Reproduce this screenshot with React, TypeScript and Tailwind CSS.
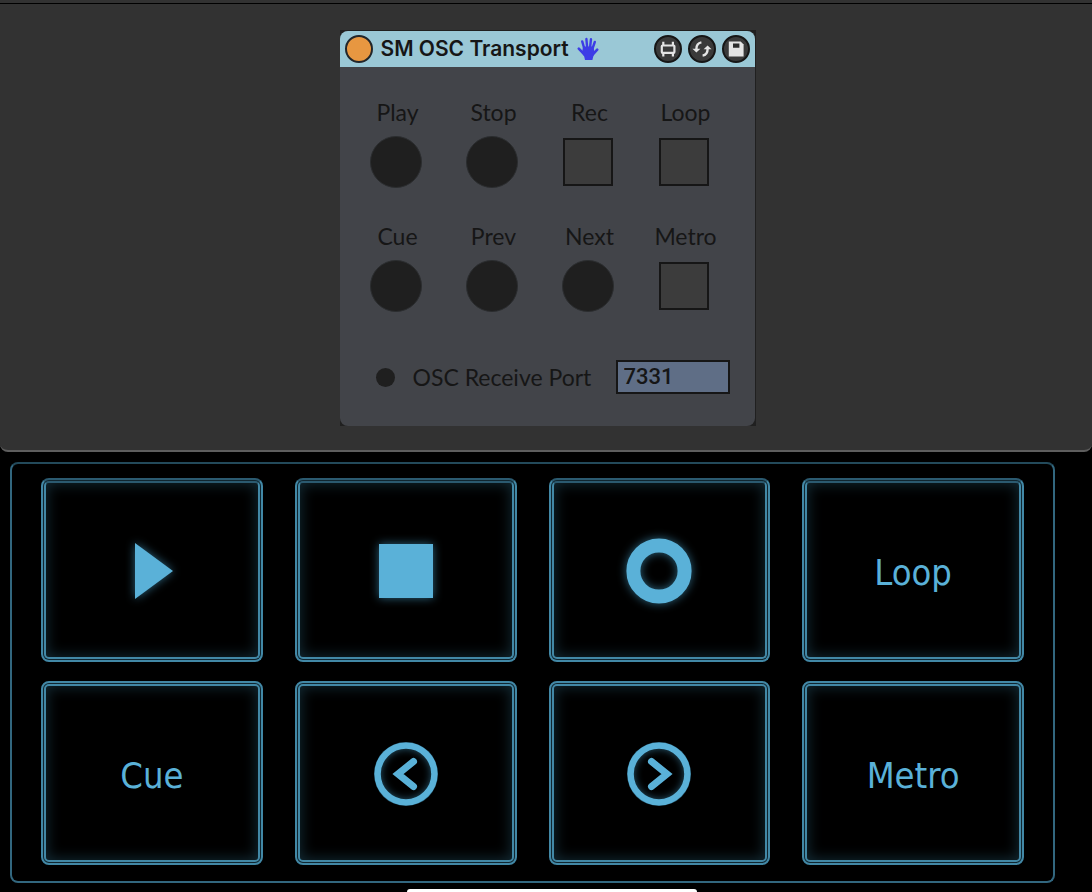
import type { ReactNode } from "react";

type Control = { name: string; kind: "bang" | "toggle" };

const controls: Control[] = [
    { name: "Play", kind: "bang" },
    { name: "Stop", kind: "bang" },
    { name: "Rec", kind: "toggle" },
    { name: "Loop", kind: "toggle" },
    { name: "Cue", kind: "bang" },
    { name: "Prev", kind: "bang" },
    { name: "Next", kind: "bang" },
    { name: "Metro", kind: "toggle" },
];

const HandIcon = () => (
    <svg viewBox="0 0 22 24" className="h-6 w-[22px]" fill="none" stroke="#3d3de6" strokeLinecap="round" aria-hidden="true">
        <path d="M7.4 12 5.2 4.4M10.2 11 9.4 2M13 11 14 2.2M15 13 17.8 5" strokeWidth="2.4" />
        <path d="M7.5 17.6 1.8 11.6M15 18.4 20.2 12.6" strokeWidth="2.6" />
        <path d="M6 9.6 16.4 9.6 17.4 15 16.4 19 15.4 23 8 23 7.2 19.5 5 16Z" fill="#3d3de6" stroke="none" />
    </svg>
);

const EditIcon = () => (
    <svg viewBox="0 0 28 28" className="size-7 shrink-0" fill="none" stroke="#e4e4e4" strokeWidth="2.2" aria-hidden="true">
        <rect x="7.8" y="10.5" width="12.6" height="7.4" rx="0.8" />
        <path d="M9.3 6.8V10.5M18.9 6.8V10.5M9.3 18V21.6M18.9 18V21.6" />
    </svg>
);

const SwapIcon = () => (
    <svg viewBox="0 0 28 28" className="size-7 shrink-0" fill="none" stroke="#e4e4e4" strokeWidth="2.4" aria-hidden="true">
        <path d="M13.4 7.4C10 8 8.4 10.4 8.4 14M14.6 20.6C18 20 19.6 17.6 19.6 14" />
        <path d="M4.4 13.8H12.4L8.4 17.4Z M23.6 14.2H15.6L19.6 10.6Z" fill="#e4e4e4" stroke="none" />
    </svg>
);

const SaveIcon = () => (
    <svg viewBox="0 0 28 28" className="size-7 shrink-0" aria-hidden="true">
        <path d="M6.8 6.6H18.6L21.6 9.6V21.4H6.8Z" fill="#e4e4e4" />
        <path d="M11 8.6H17.4V12.8H11Z" fill="#2c2c2c" />
    </svg>
);

const HeaderButton = ({ label, children }: { label: string; children: ReactNode }) => (
    <button
        aria-label={label}
        className="flex size-7 items-center justify-center rounded-full border-2 border-[#161616] bg-[#3a3a3a]"
    >
        {children}
    </button>
);

const DeviceControl = ({ name, kind }: Control) => (
    <div className="flex flex-col items-center gap-2.5">
        <label htmlFor={name} className="pl-1 text-[23px]/7">
            {name}
        </label>
        <div className="flex h-[52px] items-center">
            {kind === "bang" ? (
                <button id={name} className="size-[52px] rounded-full border border-[#2b2d2f] bg-[#1f1f1f]" />
            ) : (
                <input
                    id={name}
                    type="checkbox"
                    className="h-12 w-[50px] appearance-none border-2 border-[#161616] bg-[#3c3c3c]"
                />
            )}
        </div>
    </div>
);

const Device = () => (
    <div className="w-[416px] bg-[#202020] pt-px pr-px">
        <div className="overflow-hidden rounded-lg bg-[#424449] text-[#161616]">
            <header className="flex h-9 items-center bg-[#9ac8d6] px-[5px]">
                <button aria-label="Device activator" className="size-7 rounded-full border-2 border-[#22262a] bg-[#e79741]" />
                <h1 className="ml-2 font-['Inter'] text-[21px]/7 font-semibold">SM OSC Transport</h1>
                <span className="ml-2">
                    <HandIcon />
                </span>
                <div className="ml-auto flex gap-1.5">
                    <HeaderButton label="Edit"><EditIcon /></HeaderButton>
                    <HeaderButton label="Hot-swap"><SwapIcon /></HeaderButton>
                    <HeaderButton label="Save preset"><SaveIcon /></HeaderButton>
                </div>
            </header>
            <div className="px-2 pt-[31px] pb-8 font-['Lato']">
                <div className="grid w-96 grid-cols-4 gap-y-[34px]">
                    {controls.map((control) => (
                        <DeviceControl key={control.name} {...control} />
                    ))}
                </div>
                <div className="mt-12 flex items-center pr-[17px] pl-7">
                    <span className="size-[19px] rounded-full bg-[#1f1f1f]" />
                    <label htmlFor="port" className="ml-[18px] text-[23px]/7">OSC Receive Port</label>
                    <input
                        id="port"
                        defaultValue="7331"
                        className="ml-auto h-[34px] w-[114px] border-2 border-[#161616] bg-[#5f6e86] px-1.5 pb-0.5 font-['Roboto'] text-[22px]/7 font-medium"
                    />
                </div>
            </div>
        </div>
    </div>
);

const PlayIcon = () => (
    <svg viewBox="0 0 38 56" className="ml-1 h-14 w-[38px] overflow-visible drop-shadow-[0_0_5px_#2d637c]" aria-hidden="true">
        <path d="M0 0 38 28 0 56Z" fill="#5ab1d8" />
    </svg>
);

const StopIcon = () => (
    <svg viewBox="0 0 54 54" className="size-[54px] overflow-visible drop-shadow-[0_0_5px_#2d637c]" aria-hidden="true">
        <path d="M0 0H54V54H0Z" fill="#5ab1d8" />
    </svg>
);

const RecordIcon = () => (
    <svg viewBox="0 0 66 66" className="size-[66px] overflow-visible drop-shadow-[0_0_5px_#2d637c]" aria-hidden="true">
        <circle cx="33" cy="33" r="25.6" fill="none" stroke="#5ab1d8" strokeWidth="14" />
    </svg>
);

const ArrowIcon = ({ d }: { d: string }) => (
    <svg
        viewBox="0 0 64 64"
        className="size-16 rounded-full shadow-[inset_0_0_8px_6px_#2d637c]"
        fill="none"
        stroke="#5ab1d8"
        strokeWidth="6.4"
        aria-hidden="true"
    >
        <circle cx="32" cy="32" r="28.4" />
        <path d={d} strokeWidth="7" strokeLinecap="round" strokeLinejoin="miter" />
    </svg>
);

const topBorder = "border-[#4288a6] border-t-[#2b5a70]";
const bottomBorder = "border-[#4288a6]";

const Pad = ({ label, top, children }: { label: string; top?: boolean; children: ReactNode }) => (
    <button
        aria-label={label}
        className={`h-[184px] rounded-lg border-2 bg-[#102630] p-px ${top ? topBorder : bottomBorder}`}
    >
        <span
            className={`flex h-full items-center justify-center rounded-[5px] border-2 bg-black pt-0.5 shadow-[inset_0_0_14px_1px_#132b35] ${top ? topBorder : bottomBorder}`}
        >
            {children}
        </span>
    </button>
);

export default function App() {
    return (
        <div className="min-h-screen bg-black">
            <section className="flex flex-col items-center rounded-b-lg border-b-2 border-[#5e5e5e] bg-[#323232] pb-6">
                <div className="mb-[26px] h-1 w-full border-b border-black" />
                <div className="pl-[3px]">
                    <Device />
                </div>
            </section>
            <main className="mt-2.5 mr-[37px] ml-2.5 grid grid-cols-4 gap-x-8 gap-y-[19px] rounded-lg border-2 border-[#32677f] border-t-[#234a5b] px-[29px] pt-3.5 pb-4 font-['DejaVu_Sans_Condensed','DejaVu_Sans',sans-serif] text-4xl text-[#5ab1d8]">
                <Pad label="Play" top><PlayIcon /></Pad>
                <Pad label="Stop" top><StopIcon /></Pad>
                <Pad label="Record" top><RecordIcon /></Pad>
                <Pad label="Loop" top><span className="pt-1">Loop</span></Pad>
                <Pad label="Cue"><span className="pt-1">Cue</span></Pad>
                <Pad label="Previous"><ArrowIcon d="M39.5 19.5 24 32 39.5 44.5" /></Pad>
                <Pad label="Next"><ArrowIcon d="M24.5 19.5 40 32 24.5 44.5" /></Pad>
                <Pad label="Metro"><span className="pt-1">Metro</span></Pad>
            </main>
            <div className="mt-1.5 flex justify-center pl-3">
                <div className="h-[3px] w-[290px] rounded-t-sm bg-white" />
            </div>
        </div>
    );
}
